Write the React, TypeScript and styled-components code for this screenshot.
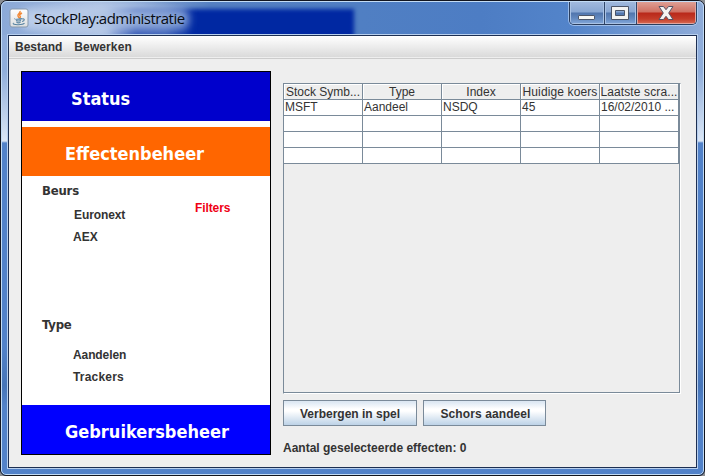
import React from 'react';
import styled, { createGlobalStyle } from 'styled-components';

const GlobalStyle = createGlobalStyle`
  * { box-sizing: border-box; }
  body { margin: 0; background: #8a8d92; overflow: hidden; }
`;

const Frame = styled.div`
  position: relative;
  width: 705px;
  height: 476px;
  border: 1px solid #12151f;
  border-radius: 7px 7px 6px 6px;
  overflow: hidden;
  background: linear-gradient(#8fabd9 0, #90aedb 70px, #dbe6f5 140px, #5282c9 142px, #5282c9 345px, #4775b8 385px, #5282c9 405px);
  font-family: "Liberation Sans", Arial, sans-serif;
  color: #333;
`;

const FrameGlow = styled.div`
  position: absolute;
  inset: 0;
  border: 1px solid #c3dcf5;
  border-radius: 6px 6px 5px 5px;
  pointer-events: none;
`;

const TitleBar = styled.header`
  position: relative;
  display: flex;
  align-items: flex-start;
  height: 34px;
  padding-left: 8px;
  overflow: hidden;
  background:
    radial-gradient(ellipse 100px 22px at 105px 18px, rgba(213,225,243,.85), rgba(213,225,243,0)),
    linear-gradient(90deg, #8ba9d7 0, #a2b9df 100px, #5580c2 210px, #507fc3 360px, #4d7dc4 480px, #5384ca 570px, #8eabd8 700px);
`;

const Backdrop = styled.div`
  position: absolute;
  left: 105px;
  top: 8px;
  width: 248px;
  height: 34px;
  background: linear-gradient(90deg, rgba(0,40,160,0), rgba(0,40,160,.65) 30px, rgba(0,40,160,.5) 60px, #0028a2 88px, #0028a2);
  filter: blur(2px);
`;

const TextHaze = styled.div`
  position: absolute;
  left: 20px;
  top: 8px;
  width: 168px;
  height: 20px;
  background: linear-gradient(90deg, rgba(200,216,240,.7), rgba(177,197,229,.95) 75px, rgba(130,160,214,.95));
  border-radius: 8px;
  filter: blur(4px);
`;

const AppIcon = styled.svg`
  position: relative;
  display: block;
  width: 20px;
  height: 20px;
  margin-top: 7px;
`;

const Title = styled.h1`
  position: relative;
  margin: 6px 0 0 5px;
  font: 400 15px/22px "Open Sans", "Noto Sans", sans-serif;
  letter-spacing: -0.54px;
  color: #080b12;
  white-space: nowrap;
`;

const WindowButtons = styled.div`
  position: relative;
  display: flex;
  width: 128px;
  height: 24px;
  margin-left: auto;
  margin-right: 7px;
  border: 1px solid #2b3e5e;
  border-top: 0;
  border-radius: 0 0 5px 5px;
  box-shadow: 0 0 0 1px rgba(185,211,245,.7);
  overflow: hidden;
`;

const WindowButton = styled.button<{ $w: number; $close?: boolean }>`
  display: flex;
  justify-content: center;
  width: ${p => p.$w}px;
  height: 23px;
  padding: 0;
  border: 1px solid ${p => (p.$close ? '#e2a59f' : '#a9c2e4')};
  border-top: 0;
  background: ${p => p.$close
    ? 'linear-gradient(#e0a49a 0, #cf7062 11px, #b9281a 12px, #c43c29 18px, #dd7960 24px)'
    : 'linear-gradient(#a3bbdf 0, #88a6d2 11px, #5075ad 12px, #658bc1 18px, #8cafe0 24px)'};
  & + & { box-shadow: -1px 0 0 #30466a; margin-left: 1px; }
  svg { display: block; flex: none; margin-left: -1px; }
`;

const Client = styled.main`
  display: flex;
  flex-direction: column;
  width: 689px;
  height: 433px;
  margin-left: 7px;
  border: 1px solid #1d2f52;
  box-shadow: 0 0 0 1px #b7cfee;
  position: relative;
  background: #eee;
`;

const MenuBar = styled.nav`
  display: flex;
  flex: none;
  gap: 12px;
  height: 23px;
  padding: 4px 0 0 6px;
  border-bottom: 1px solid #ccc;
  background: linear-gradient(#fff, #dadada 21px, #eee 21px);
`;

const Bold = styled.span<{ $track?: number; $indent?: number }>`
  padding-left: ${p => p.$indent ?? 0}px;
  font: 700 12px/14px "Liberation Sans", Arial, sans-serif;
  letter-spacing: ${p => p.$track ?? 0}px;
  white-space: nowrap;
`;

const Workspace = styled.div`
  display: flex;
  flex: 1;
  padding: 12px 0 0 12px;
`;

const Sidebar = styled.aside`
  display: flex;
  flex-direction: column;
  width: 250px;
  height: 384px;
  border: 1px solid #000;
  background: #fff;
`;

const Section = styled.h2<{ $bg: string; $left: number; $track?: number; $gap?: number }>`
  flex: none;
  height: 49px;
  margin: 0 0 ${p => p.$gap ?? 0}px;
  padding: 4px 0 0 ${p => p.$left}px;
  background: ${p => p.$bg};
  color: #fff;
  font: 700 18px/46px "DejaVu Sans Condensed", "Noto Sans", sans-serif;
  letter-spacing: ${p => p.$track ?? 0}px;
  white-space: nowrap;
`;

const Filters = styled.div`
  display: grid;
  grid-template-columns: 153px 1fr;
  height: 229px;
  padding: 7px 0 0 20px;
`;

const Column = styled.div`
  display: flex;
  flex-direction: column;
`;

const GroupTitle = styled.h3<{ $top?: number }>`
  margin: ${p => p.$top ?? 0}px 0 0;
  font: 700 13px/16px "DejaVu Sans Condensed", Verdana, sans-serif;
  letter-spacing: -0.2px;
`;

const Options = styled.div<{ $top: number }>`
  display: flex;
  flex-direction: column;
  gap: 8px;
  margin-top: ${p => p.$top}px;
  padding-left: 31px;
`;

const FilterLink = styled(Bold)`
  margin-top: 18px;
  color: #f00014;
`;

const Content = styled.section`
  display: flex;
  flex-direction: column;
  margin: 12px 0 0 12px;
`;

const TablePane = styled.div`
  width: 398px;
  height: 311px;
  border: 1px solid #7a8a99;
  border-right-color: #fff;
  border-bottom-color: #fff;
  box-shadow: inset -1px -1px 0 #7a8a99;
`;

const Table = styled.div`
  display: grid;
  grid-template-columns: repeat(5, 79px);
  grid-auto-rows: 16px;
  width: 395px;
  font: 400 12px/15px "Liberation Sans", Arial, sans-serif;
`;

const Cell = styled.div<{ $track?: number }>`
  padding-left: 1px;
  border-right: 1px solid #7a8a99;
  border-bottom: 1px solid #7a8a99;
  background: #fff;
  letter-spacing: ${p => p.$track ?? 0}px;
  white-space: nowrap;
`;

const HeadCell = styled(Cell)`
  padding: 1px 0 0;
  background: #eee;
  box-shadow: inset 1px 1px 0 #fff;
  text-align: center;
`;

const Actions = styled.div`
  display: flex;
  gap: 6px;
  margin: 6px 0 15px;
`;

const ActionButton = styled.button<{ $w: number }>`
  width: ${p => p.$w}px;
  height: 26px;
  padding: 0;
  border: 1px solid #7a8a99;
  background: linear-gradient(#dde8f3 1px, #fff 8px, #fff 10px, #b8cfe5 25px);
  color: #333;
`;

const columns = [
  { name: 'Stock Symb...', track: 0 },
  { name: 'Type', track: 0 },
  { name: 'Index', track: 0 },
  { name: 'Huidige koers', track: 0.12 },
  { name: 'Laatste scra...', track: 0.12 },
];
const rows = [
  ['MSFT', 'Aandeel', 'NSDQ', '45', '16/02/2010 ...'],
  ['', '', '', '', ''],
  ['', '', '', '', ''],
  ['', '', '', '', ''],
];

export default function App() {
  return (
    <>
      <GlobalStyle />
      <Frame>
        <TitleBar>
          <Backdrop />
          <TextHaze />
          <AppIcon viewBox="0 0 20 20">
            <defs>
              <linearGradient id="tile" x2="0" y2="1">
                <stop stopColor="#fff" />
                <stop offset="1" stopColor="#dcdedf" />
              </linearGradient>
            </defs>
            <rect x="1" y="1" width="18" height="18" rx="2" fill="url(#tile)" stroke="#8799ad" />
            <path d="M11 3c1 2-3 3-2 5l1 2M13 5c-2 1-3 2-2 3s0 2-1 2" fill="none" stroke="#f28a38" strokeWidth="1.5" />
            <path d="M6 10.5c-1 1 6 1 7 0M7 12.5c1 .7 4 .7 5 0M7.5 14.3c1 .6 3 .6 4 0M13 11c3-1 3 2 0 2.5M4.5 15c-2 2 9 2.4 11 .2" fill="none" stroke="#5682a1" strokeWidth="1.1" />
          </AppIcon>
          <Title>StockPlay:administratie</Title>
          <WindowButtons>
            <WindowButton $w={34} aria-label="Minimaliseren">
              <svg width="20" height="24" viewBox="0 0 20 24">
                <rect x="2.5" y="14.5" width="16" height="4" rx=".6" fill="#f7f7f5" stroke="#4c5568" />
              </svg>
            </WindowButton>
            <WindowButton $w={32} aria-label="Maximaliseren">
              <svg width="20" height="24" viewBox="0 0 20 24">
                <path d="M1.5 5.5h17v13h-17zM5.500 9.500v5h9v-5z" fill="#f3f3f2" fillRule="evenodd" stroke="#4c5568" strokeLinejoin="round" />
              </svg>
            </WindowButton>
            <WindowButton $w={59} $close aria-label="Sluiten">
              <svg width="18" height="24" viewBox="0 0 18 24">
                <path d="M2 5.500h4.500L9 8.700l2.500-3.200H16L11.700 12l4.300 6.500h-4.500L9 15.300l-2.500 3.200H2L6.300 12z" fill="#f4f3f2" stroke="#545365" strokeLinejoin="round" />
              </svg>
            </WindowButton>
          </WindowButtons>
        </TitleBar>
        <Client>
          <MenuBar>
            <Bold>Bestand</Bold>
            <Bold $track={0.1}>Bewerken</Bold>
          </MenuBar>
          <Workspace>
            <Sidebar>
              <Section $bg="#0000cc" $left={49} $gap={6}>Status</Section>
              <Section $bg="#ff6600" $left={43}>Effectenbeheer</Section>
              <Filters>
                <Column>
                  <GroupTitle>Beurs</GroupTitle>
                  <Options $top={9}>
                    <Bold $indent={1} $track={-0.1}>Euronext</Bold>
                    <Bold>AEX</Bold>
                  </Options>
                  <GroupTitle $top={73}>Type</GroupTitle>
                  <Options $top={15}>
                    <Bold $track={-0.1}>Aandelen</Bold>
                    <Bold $track={0.2}>Trackers</Bold>
                  </Options>
                </Column>
                <FilterLink $track={-0.1}>Filters</FilterLink>
              </Filters>
              <Section $bg="#0000ff" $left={43}>Gebruikersbeheer</Section>
            </Sidebar>
            <Content>
              <TablePane>
                <Table>
                  {columns.map(c => <HeadCell key={c.name} $track={c.track}>{c.name}</HeadCell>)}
                  {rows.map((row, r) => row.map((value, c) => <Cell key={`${r}-${c}`}>{value}</Cell>))}
                </Table>
              </TablePane>
              <Actions>
                <ActionButton $w={134}><Bold>Verbergen in spel</Bold></ActionButton>
                <ActionButton $w={123}><Bold $indent={2} $track={0.1}>Schors aandeel</Bold></ActionButton>
              </Actions>
              <Bold>Aantal geselecteerde effecten: 0</Bold>
            </Content>
          </Workspace>
        </Client>
        <FrameGlow />
      </Frame>
    </>
  );
}
